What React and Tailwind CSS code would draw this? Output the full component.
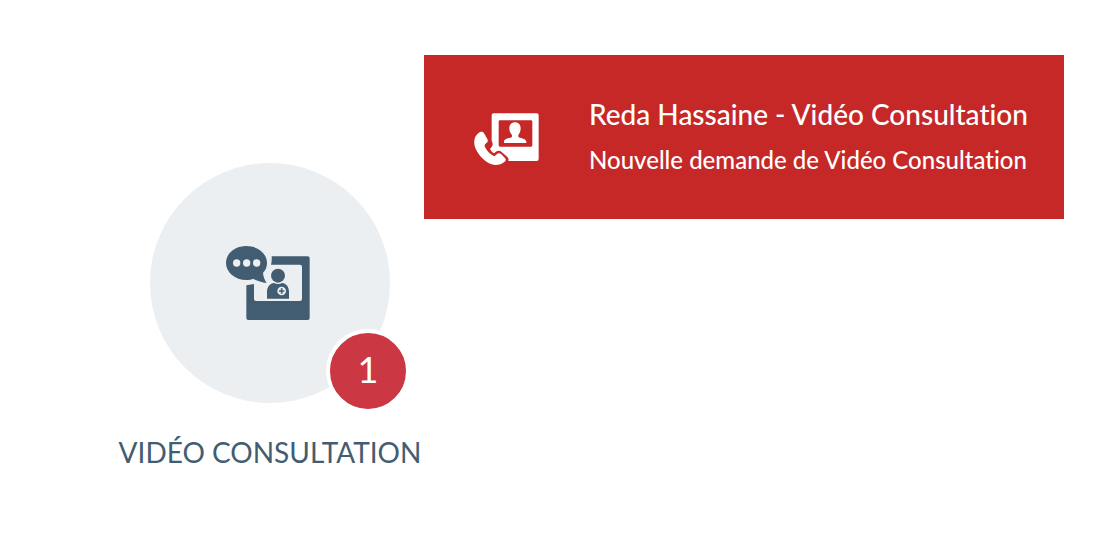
function ConsultationIcon() {
  return (
    <svg viewBox="6 0 312 282" className="h-[94px] w-[104px]" aria-hidden="true">
      <g fill="#425c71">
        <path d="M167 61H275Q281 61 281 67V246Q281 252 275 252H97Q91 252 91 246V148L114 144V189Q114 195 120 195H252Q258 195 258 189V92Q258 86 252 86H165Q168 74 167 61Z" />
        <path d="M91 30C125 30 153 52 153 81C153 93 149 102 141 111C142 122 146 132 152 141C137 139 123 134 111 128C105 131 98 132 91 132C57 132 30 109 30 81C30 52 57 30 91 30Z" />
        <circle cx="186" cy="119" r="21" />
        <path d="M153 188V167C153 153 162 142 174 141Q186 147 199 141C211 143 219 153 219 167V188Z" />
      </g>
      <g fill="#ebeff2">
        <circle cx="62" cy="81" r="11" />
        <circle cx="92" cy="81" r="11" />
        <circle cx="122" cy="81" r="11" />
        <circle cx="197" cy="165" r="13" />
      </g>
      <path d="M197 157V173M189 165H205" stroke="#425c71" strokeWidth="5" />
    </svg>
  );
}

function CallIcon() {
  return (
    <svg viewBox="30 14 195 171" className="h-[57px] w-[65px] shrink-0" aria-hidden="true">
      <path
        fill="#fff"
        fillRule="evenodd"
        d="M89 27H218Q224 27 224 33V164Q224 170 218 170H133Q135 164 131 159L113 143Q106 137 98 141L90 147Q83 144 78 134L83 128Q89 119 83 110V33Q83 27 89 27ZM108 48Q104 48 104 52V123Q104 127 108 127H201Q205 127 205 123V52Q205 48 201 48Z"
      />
      <path
        fill="#fff"
        d="M153 54C163 54 170 61 170 72C170 81 167 87 163 92V97C165 102 187 101 187 112V116H120V112C120 101 142 102 144 97V92C139 87 136 81 136 72C136 61 143 54 153 54Z"
      />
      <path
        fill="#fff"
        d="M47 84C53 81 58 83 61 88L70 104C73 110 71 114 66 117C61 121 61 125 64 130C70 141 78 149 88 154C93 156 95 153 99 149C103 145 108 146 112 150L122 160C127 165 126 169 121 173C107 184 88 186 70 174C49 160 34 139 31 120C29 104 35 91 47 84Z"
      />
    </svg>
  );
}

export default function App() {
  return (
    <main className="flex items-start bg-white pt-[55px] pr-[30px] pl-[116px] font-['Lato',sans-serif] [font-variant-ligatures:none]">
      <a href="#video-consultation" className="mt-[108px] flex w-[308px] shrink-0 flex-col items-center text-[#425c71]">
        <span className="relative flex size-60 items-center justify-center rounded-full bg-[#ebeff2]">
          <ConsultationIcon />
          <span className="absolute -right-5 -bottom-2.5 flex size-[84px] items-center justify-center rounded-full border-4 border-white bg-[#cb3844] pb-1 text-4xl text-white">
            1
          </span>
        </span>
        <span className="mt-8 text-[28px] leading-[34px] whitespace-nowrap">VIDÉO CONSULTATION</span>
      </a>
      <section role="alert" className="flex h-[164px] min-w-0 flex-1 items-center gap-[50px] bg-[#c62828] pr-8 pl-[50px] text-white">
        <CallIcon />
        <div className="whitespace-nowrap font-medium">
          <h1 className="text-[28px] leading-[46px]">Reda Hassaine - Vidéo Consultation</h1>
          <p className="text-2xl leading-[46px]">Nouvelle demande de Vidéo Consultation</p>
        </div>
      </section>
    </main>
  );
}
